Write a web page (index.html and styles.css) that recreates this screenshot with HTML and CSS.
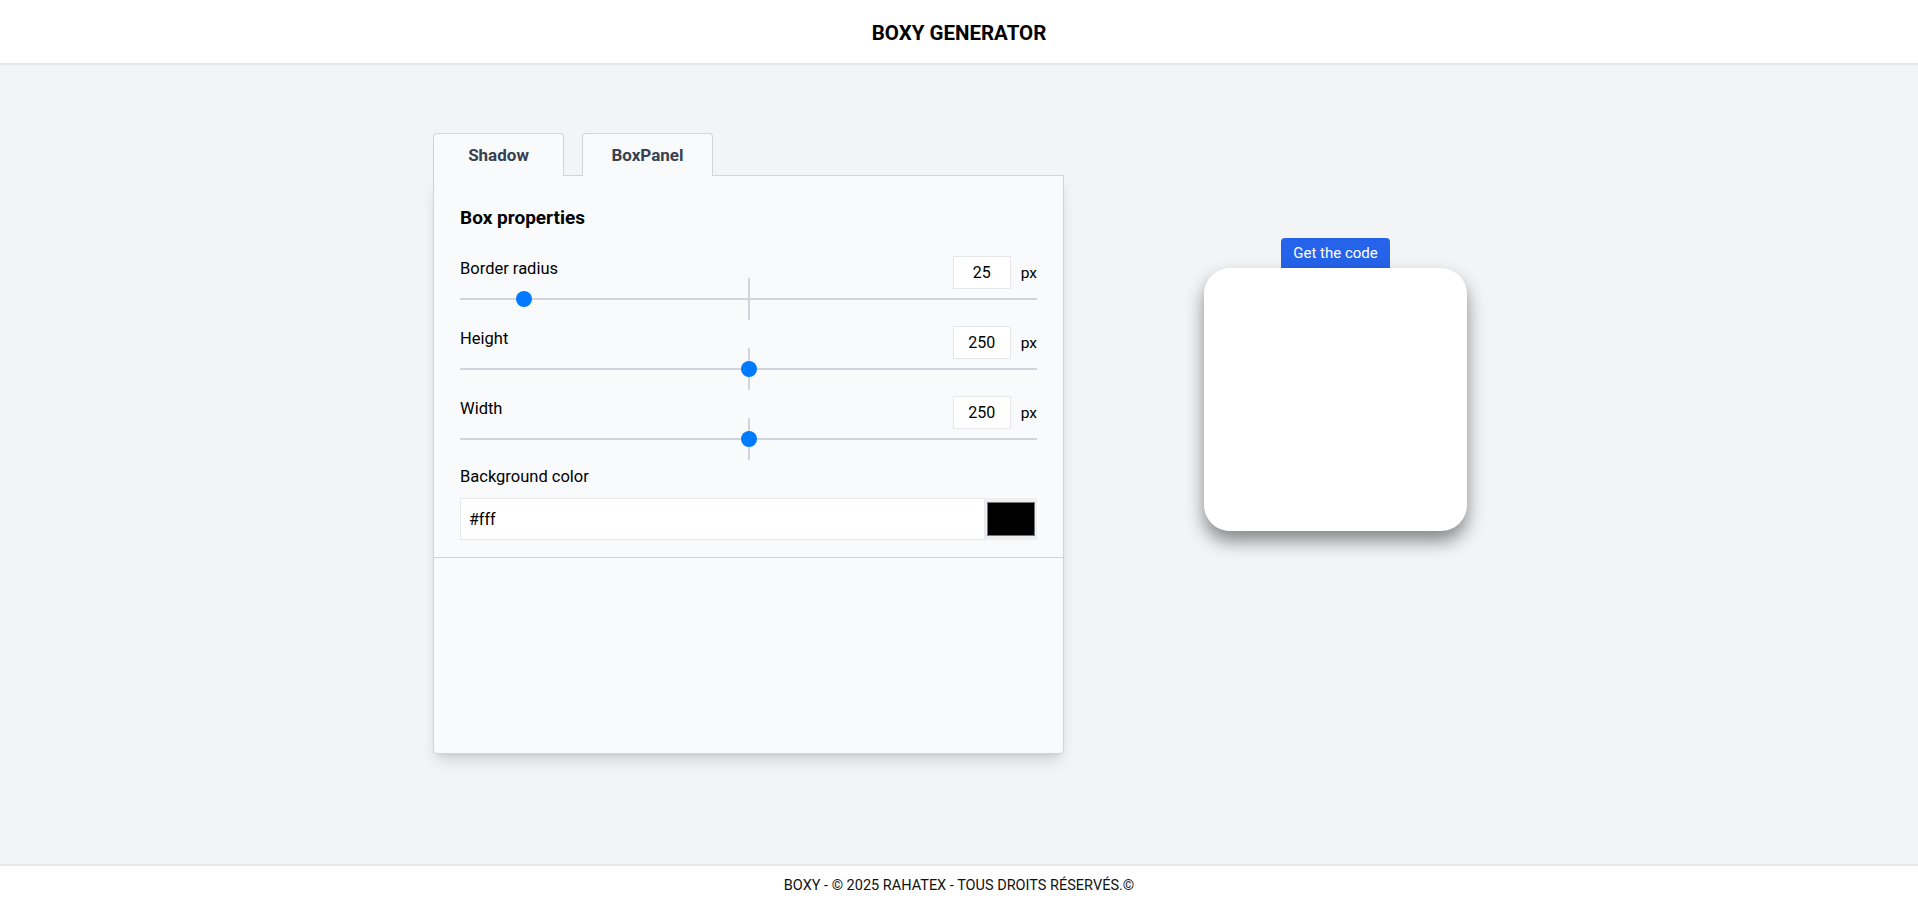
FILE: index.html
```html
<!DOCTYPE html>
<html lang="fr">
<head>
<meta charset="utf-8">
<title>Boxy Generator</title>
<link rel="stylesheet" href="styles.css">
</head>
<body>
<header class="topbar">
  <h1 class="brand">BOXY GENERATOR</h1>
</header>

<main class="workspace">
  <section class="editor">
    <nav class="tabs">
      <button class="tab">Shadow</button>
      <button class="tab">BoxPanel</button>
    </nav>
    <div class="panel">
      <div class="panel-body">
        <h2 class="panel-title">Box properties</h2>

        <div class="field">
          <div class="field-head">
            <label class="field-label">Border radius</label>
            <div class="unit">
              <input class="num" type="text" value="25">
              <span class="unit-text">px</span>
            </div>
          </div>
          <div class="range-wrap">
            <input class="range" type="range" min="0" max="250" value="25">
          </div>
        </div>

        <div class="field">
          <div class="field-head">
            <label class="field-label">Height</label>
            <div class="unit">
              <input class="num" type="text" value="250">
              <span class="unit-text">px</span>
            </div>
          </div>
          <div class="range-wrap">
            <input class="range" type="range" min="0" max="500" value="250">
          </div>
        </div>

        <div class="field">
          <div class="field-head">
            <label class="field-label">Width</label>
            <div class="unit">
              <input class="num" type="text" value="250">
              <span class="unit-text">px</span>
            </div>
          </div>
          <div class="range-wrap">
            <input class="range" type="range" min="0" max="500" value="250">
          </div>
        </div>

        <div class="color-field">
          <label class="color-label">Background color</label>
          <div class="color-row">
            <input class="text-input" type="text" value="#fff">
            <span class="swatch"><span class="swatch-fill"></span></span>
          </div>
        </div>
      </div>
      <div class="panel-extra"></div>
    </div>
  </section>

  <section class="preview">
    <button class="code-btn">Get the code</button>
    <div class="box"></div>
  </section>
</main>

<footer class="footer">BOXY - © 2025 RAHATEX - TOUS DROITS RÉSERVÉS.©</footer>
</body>
</html>
```

FILE: styles.css
```css
* { box-sizing: border-box; }

html, body { height: 100%; }

body {
  margin: 0;
  min-height: 100vh;
  display: flex;
  flex-direction: column;
  background: #f3f4f6;
  color: #000;
  font-family: Roboto, "Noto Sans", Arial, sans-serif;
}

.topbar {
  background: #fff;
  border-bottom: 2px solid #e5e7eb;
  height: 65px;
  padding-top: 19px;
  text-align: center;
}

.brand {
  margin: 0;
  font-size: 20.5px;
  line-height: 28px;
  font-weight: 700;
  color: #000;
}

.workspace {
  flex: 1;
  display: flex;
  align-items: flex-start;
  padding: 68px 0 0 433px;
}

.editor {
  width: 631px;
}

.tabs {
  display: flex;
  gap: 18px;
  position: relative;
  z-index: 1;
  margin-bottom: -1px;
}

.tab {
  width: 131px;
  height: 43px;
  padding: 0;
  border: 1px solid #d1d5db;
  border-bottom: none;
  border-radius: 4px 4px 0 0;
  background: #f9fafb;
  color: #374151;
  font-family: inherit;
  font-size: 17px;
  font-weight: 700;
  line-height: 43px;
  text-align: center;
}

.panel {
  background: #f9fafb;
  border: 1px solid #d1d5db;
  border-radius: 0 0 4px 4px;
  box-shadow: 0 10px 15px -3px rgba(0,0,0,0.12), 0 4px 6px -4px rgba(0,0,0,0.12);
}

.panel-body {
  padding: 30px 26px 17px;
  border-bottom: 1px solid #d1d5db;
}

.panel-title {
  margin: 0 0 26px;
  font-size: 19px;
  line-height: 24px;
  font-weight: 700;
  color: #000;
}

.field {
  margin-bottom: 17px;
}

.field-head {
  display: flex;
  justify-content: space-between;
  align-items: flex-start;
  height: 33px;
}

.field-label {
  font-size: 16.5px;
  line-height: 26px;
  color: #000;
}

.unit {
  display: flex;
  align-items: center;
  gap: 10px;
}

.num {
  width: 58px;
  height: 33px;
  margin: 0;
  padding: 0;
  border: 1px solid #e5e7eb;
  background: #fff;
  color: #000;
  font-family: inherit;
  font-size: 16px;
  text-align: center;
  outline: none;
}

.unit-text {
  font-size: 15.5px;
  line-height: 20px;
  color: #000;
}

.range-wrap {
  position: relative;
  height: 20px;
}

.range-wrap::before {
  content: "";
  position: absolute;
  left: calc(50% - 1px);
  top: -11px;
  width: 2px;
  height: 42px;
  background: #d1d5db;
}

.range {
  position: relative;
  z-index: 1;
  display: block;
  width: 100%;
  height: 20px;
  margin: 0;
  padding: 0;
  -webkit-appearance: none;
  appearance: none;
  background: transparent;
}

.range::-webkit-slider-runnable-track {
  height: 2px;
  background: #d1d5db;
  border: none;
}

.range::-webkit-slider-thumb {
  -webkit-appearance: none;
  appearance: none;
  width: 16px;
  height: 16px;
  margin-top: -7px;
  border: none;
  border-radius: 50%;
  background: #007bff;
}

.color-label {
  display: block;
  font-size: 16.5px;
  line-height: 22px;
  color: #000;
  margin-bottom: 10px;
}

.color-row {
  display: flex;
  height: 42px;
}

.text-input {
  flex: 1;
  height: 42px;
  margin: 0;
  padding: 0 8px;
  border: 1px solid #e5e7eb;
  background: #fff;
  color: #000;
  font-family: inherit;
  font-size: 16px;
  outline: none;
}

.swatch {
  width: 52px;
  height: 42px;
  padding: 4px 2px;
  background: #efefef;
  display: flex;
}

.swatch-fill {
  flex: 1;
  background: #000;
  border: 1px solid #767676;
}

.panel-extra {
  height: 195px;
}

.preview {
  margin: 105px 0 0 140px;
  display: flex;
  flex-direction: column;
  align-items: center;
}

.code-btn {
  height: 30px;
  padding: 0 12px;
  border: none;
  border-radius: 4px 4px 0 0;
  background: #2563eb;
  color: #fff;
  font-family: inherit;
  font-size: 15px;
  line-height: 30px;
}

.box {
  width: 263px;
  height: 263px;
  background: #fff;
  border-radius: 26px;
  box-shadow: 0 10px 18px rgba(0,0,0,0.45);
}

.footer {
  background: #fff;
  border-top: 2px solid #e5e7eb;
  padding: 10px 0 4px;
  font-size: 14.5px;
  line-height: 20px;
  text-align: center;
  color: #111;
}
```
